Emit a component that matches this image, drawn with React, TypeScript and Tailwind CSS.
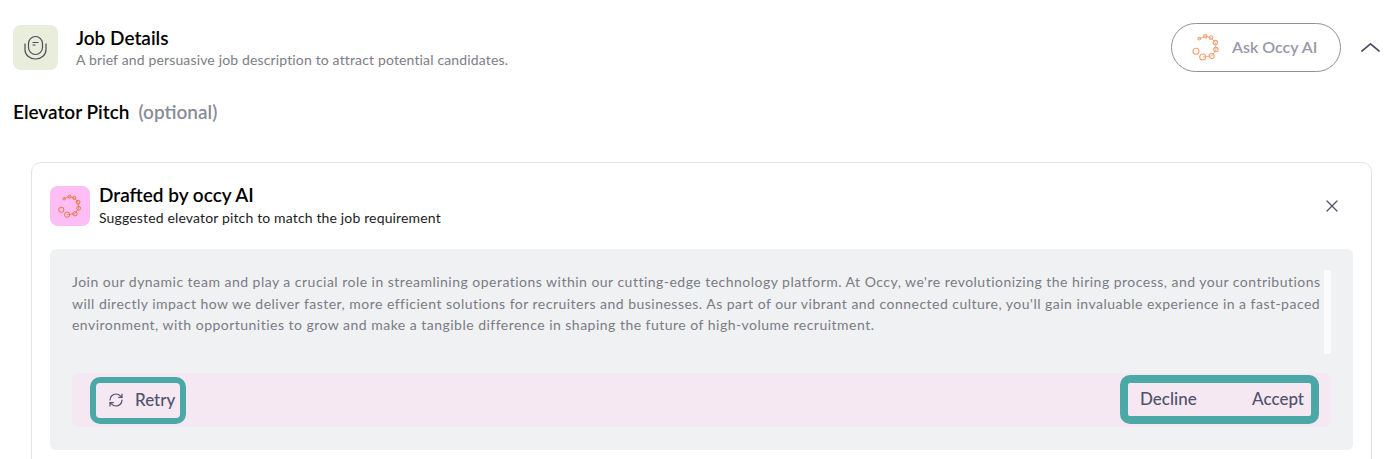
import { RefreshCw, X } from 'lucide-react';

const ringDots = [
  { x: 8.3, y: 6.6, r: 1.4 },
  { x: 14.3, y: 4.3, r: 1.7 },
  { x: 19.9, y: 5.6, r: 1.8 },
  { x: 24.3, y: 10.6, r: 2.2 },
  { x: 25, y: 17.6, r: 2.2 },
  { x: 20.7, y: 24, r: 2.500 },
  { x: 11.7, y: 25, r: 3 },
  { x: 5, y: 19.3, r: 3 },
];

function OccyRing({ className, color }: { className: string; color: string }) {
  return (
    <svg viewBox="0 0 30 30" fill="none" className={className}>
      <path d="M8.300 6.600 14.300 4.300 19.900 5.600 24.300 10.600 25 17.600 20.700 24 11.700 25" stroke={color} strokeWidth="0.8" />
      {ringDots.map((d) => (
        <circle key={d.x} cx={d.x} cy={d.y} r={d.r} stroke={color} strokeWidth="1.1" />
      ))}
    </svg>
  );
}

function JobIcon() {
  return (
    <svg viewBox="0 0 45 45" fill="none" stroke="#4d4e56" strokeWidth="1.2" className="w-[45px] h-[45px]">
      <rect x="15.500" y="11.500" width="14" height="18" rx="7" />
      <path d="M19.500 17.500h6M19.500 20h3" />
      <path d="M12 18.500v6c0 5.500 4.500 9.500 10.500 9.500S33 30 33 24.500v-6" />
    </svg>
  );
}

export default function App() {
  return (
    <div className="h-[459px] overflow-hidden bg-white font-['Lato','Liberation_Sans',sans-serif]">
      {/* Section header */}
      <div className="flex items-center justify-between pl-[13px] pr-[5px] pt-[23px] h-[72px]">
        <div className="flex items-center gap-[18px]">
          <div className="w-[45px] h-[45px] rounded-lg bg-[#e8eddc]">
            <JobIcon />
          </div>
          <div>
            <div className="text-[19px] leading-[24px] font-semibold text-black">Job Details</div>
            <div className="text-[14px] leading-[20px] tracking-[0.15px] text-[#7d7d86]">
              A brief and persuasive job description to attract potential candidates.
            </div>
          </div>
        </div>
        <div className="flex items-center gap-[20px]">
          <button className="flex items-center w-[170px] h-[49px] pl-[19px] pb-[2px] rounded-full border border-[#8f90a0] text-[16px] font-semibold text-[#9798a8]">
            <OccyRing className="w-[30px] h-[30px] mr-[11px]" color="#f3a071" />
            Ask Occy AI
          </button>
          <svg viewBox="0 0 19 9" fill="none" stroke="#4b4d68" strokeWidth="1.6" className="w-[19px] h-[9px]">
            <path d="M0.500 8.500 9.500 0.800 18.500 8.500" />
          </svg>
        </div>
      </div>

      <div className="pl-[13px] pt-[28px] flex items-center gap-[9px] text-[19px] leading-[24px] font-semibold">
        <span className="text-black">Elevator Pitch</span>
        <span className="text-[#8a8b99]">(optional)</span>
      </div>

      {/* Drafted suggestion card */}
      <div className="ml-[31px] mr-[13px] mt-[38px] h-[400px] rounded-[10px] border border-[#e2e3e5] px-[18px] pt-[20px]">
        <div className="flex items-center justify-between">
          <div className="flex items-center gap-[9px]">
            <div className="w-[40px] h-[40px] rounded-lg bg-[#fdbdf5] flex items-center justify-center">
              <OccyRing className="w-[26px] h-[26px]" color="#e8713a" />
            </div>
            <div>
              <div className="text-[19px] leading-[24px] font-semibold text-black">Drafted by occy AI</div>
              <div className="text-[14px] leading-[21px] tracking-[0.15px] text-[#1c1c24]">
                Suggested elevator pitch to match the job requirement
              </div>
            </div>
          </div>
          <X className="mr-[11px] text-[#50526b]" size={20} strokeWidth={1.5} />
        </div>

        <div className="mt-[21px] h-[201px] rounded-md bg-[#f0f1f3] px-[22px] pt-[21px]">
          <div className="flex h-[84px]">
            <div className="flex-1 pt-[1px] text-[14px] leading-[21.500px] tracking-[0.48px] text-[#7a7b85] whitespace-nowrap">
              <p>
                Join our dynamic team and play a crucial role in streamlining operations within our cutting-edge technology platform. At Occy, we're revolutionizing the hiring process, and your contributions
              </p>
              <p>
                will directly impact how we deliver faster, more efficient solutions for recruiters and businesses. As part of our vibrant and connected culture, you'll gain invaluable experience in a fast-paced
              </p>
              <p>
                environment, with opportunities to grow and make a tangible difference in shaping the future of high-volume recruitment.
              </p>
            </div>
            <div className="w-[7px] bg-white/70" />
          </div>

          <div className="mt-[19px] h-[54px] rounded-md bg-[#f5e8f3] flex items-center justify-between pl-[18px] pr-[12px]">
            <button className="flex items-center gap-[11px] w-[96px] h-[47px] pl-[12px] rounded-[10px] border-[6px] border-[#4aa9a6] text-[17px] font-medium text-[#50526b]">
              <RefreshCw size={16} strokeWidth={1.8} />
              Retry
            </button>
            <div className="flex items-center justify-between w-[199px] h-[49px] mb-[2px] pl-[12px] pr-[7px] rounded-[10px] border-[8px] border-[#4aa9a6] text-[17px] font-medium text-[#50526b]">
              <span>Decline</span>
              <span>Accept</span>
            </div>
          </div>
        </div>
      </div>
    </div>
  );
}
